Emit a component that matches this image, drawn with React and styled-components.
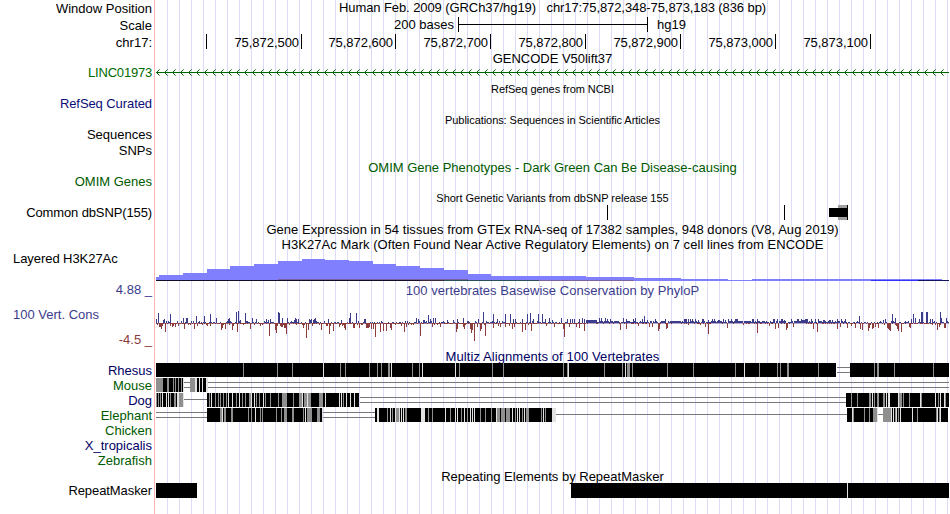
import React from 'react'
import styled, { createGlobalStyle } from 'styled-components';

const BLACK = '#000';
const GREY = '#8f8f8f';
const LIGHT = '#e2e2e2';

const TICKS = [
  { width: 51, text: '' },
  { width: 95, text: '75,872,500' },
  { width: 94, text: '75,872,600' },
  { width: 95, text: '75,872,700' },
  { width: 95, text: '75,872,800' },
  { width: 95, text: '75,872,900' },
  { width: 95, text: '75,873,000' },
  { width: 95, text: '75,873,100' },
];

// [start x, top y]
const H3K27AC = [
  [156, 277], [159, 275], [183, 273], [207, 269], [230, 266], [254, 264], [278, 261],
  [302, 259], [325, 260], [349, 261], [373, 264], [396, 266], [420, 268], [444, 270],
  [468, 274], [491, 276], [586, 277], [634, 278], [681, 279], [728, 280], [752, 279],
  [942, 280], [949, 280],
];

// [x1, x2, y, colour]
const H3K27AC_BASE = [
  [278, 468, 279, '#7a62a0'], [156, 420, 280, '#140c28'], [420, 444, 280, '#3a2838'],
  [444, 539, 280, '#28505a'], [539, 634, 280, '#7c64a0'], [871, 918, 280, '#3434ff'],
  [918, 949, 280, '#14145c'],
];

// peaks of the conservation score, offsets are in thirds of a pixel
const PEAKS = [
  {
    origin: 150,
    up: [[18, 4], [25, 10], [40, 3], [43, 4], [61, 9], [100, 5], [109, 5], [112, 5], [124, 2], [139, 7], [148, 2], [163, 7], [181, 9], [199, 5], [217, 2], [232, 2], [235, 4], [238, 5], [259, 11], [265, 12], [271, 3], [286, 10], [292, 2], [307, 5], [319, 4], [343, 2], [349, 4], [355, 3], [361, 4], [385, 11], [388, 10], [397, 5], [412, 5], [433, 3], [436, 5], [439, 4], [445, 4], [478, 4], [481, 3], [484, 4], [490, 3], [493, 4], [496, 5], [499, 2], [535, 4], [574, 3], [598, 5], [601, 10], [619, 10], [643, 4], [646, 4], [799, 5], [805, 4]],
    down: [[22, 2], [28, 4], [31, 4], [34, 6], [37, 3], [46, 9], [61, 3], [67, 4], [70, 3], [76, 4], [85, 3], [103, 6], [115, 2], [121, 2], [133, 6], [142, 3], [157, 2], [172, 3], [181, 3], [214, 7], [217, 5], [220, 2], [226, 6], [247, 7], [250, 3], [262, 9], [280, 2], [301, 6], [313, 2], [331, 3], [358, 13], [376, 7], [379, 10], [382, 3], [391, 3], [394, 4], [397, 4], [403, 5], [406, 5], [409, 11], [418, 2], [460, 5], [469, 15], [475, 7], [487, 3], [514, 7], [529, 3], [532, 3], [538, 11], [541, 3], [550, 8], [568, 4], [571, 2], [577, 3], [583, 5], [586, 7], [610, 5], [613, 5], [628, 5], [634, 2], [649, 5], [652, 5], [655, 5], [658, 4], [664, 6], [670, 6], [676, 14], [691, 9], [700, 8], [709, 8], [721, 5], [724, 7], [736, 2], [754, 3], [763, 9], [769, 4], [784, 2]],
  },
  {
    origin: 420,
    up: [[10, 3], [13, 3], [25, 8], [31, 4], [40, 5], [46, 5], [82, 3], [100, 3], [112, 4], [130, 5], [145, 2], [175, 4], [190, 11], [220, 9], [232, 4], [256, 9], [271, 9], [280, 4], [286, 4], [307, 4], [322, 9], [331, 10], [340, 4], [355, 9], [367, 9], [376, 4], [388, 5], [397, 3], [424, 5], [442, 4], [451, 4], [457, 4], [463, 4], [478, 4], [487, 5], [493, 4], [499, 3], [502, 3], [505, 3], [508, 3], [511, 3], [514, 3], [517, 3], [520, 3], [523, 3], [526, 3], [529, 3], [538, 5], [544, 5], [556, 5], [562, 4], [571, 4], [589, 2], [610, 5], [619, 4], [640, 4], [646, 5], [667, 4], [673, 7], [682, 3], [706, 4], [736, 4], [754, 2], [757, 2], [760, 2], [763, 2], [769, 2], [772, 2], [775, 2], [781, 2], [787, 2], [796, 4], [805, 4]],
    down: [[1, 13], [37, 4], [43, 2], [61, 4], [109, 9], [112, 6], [130, 4], [133, 6], [151, 6], [154, 10], [157, 7], [163, 18], [172, 4], [181, 8], [184, 6], [196, 13], [220, 5], [235, 3], [241, 4], [256, 4], [268, 3], [277, 6], [283, 4], [307, 9], [316, 7], [334, 8], [379, 3], [403, 4], [430, 6], [433, 14], [448, 4], [469, 4], [478, 5], [493, 8], [601, 7], [619, 6], [655, 3], [688, 4], [697, 4], [715, 8], [718, 6], [739, 6], [742, 5]],
  },
  {
    origin: 680,
    up: [[13, 4], [19, 4], [31, 4], [37, 4], [46, 4], [55, 3], [67, 4], [70, 4], [85, 3], [97, 4], [103, 4], [115, 3], [118, 3], [130, 4], [136, 3], [145, 4], [154, 4], [166, 4], [169, 4], [172, 4], [178, 2], [181, 2], [187, 2], [193, 2], [196, 2], [199, 2], [202, 2], [205, 2], [208, 2], [211, 2], [217, 4], [220, 4], [232, 4], [250, 2], [268, 2], [280, 4], [283, 4], [292, 4], [304, 4], [307, 4], [313, 3], [334, 4], [352, 4], [355, 4], [364, 4], [367, 3], [370, 3], [373, 3], [376, 4], [379, 4], [382, 4], [394, 4], [406, 4], [415, 4], [430, 3], [433, 3], [436, 2], [448, 3], [451, 3], [457, 3], [472, 4], [484, 4], [496, 4], [538, 7], [610, 3], [616, 4], [637, 9], [646, 5], [676, 2], [694, 4], [700, 9], [706, 5], [718, 4], [724, 11], [727, 11], [739, 11], [742, 11], [751, 4], [757, 4], [781, 11], [784, 5], [799, 5]],
    down: [[25, 2], [61, 2], [76, 4], [85, 11], [142, 5], [190, 2], [232, 10], [268, 3], [286, 6], [295, 5], [319, 7], [322, 5], [340, 4], [400, 6], [412, 9], [472, 6], [481, 4], [502, 5], [514, 3], [526, 5], [541, 6], [547, 7], [565, 8], [568, 5], [577, 6], [580, 5], [586, 4], [595, 5], [622, 5], [625, 6], [628, 7], [631, 8], [649, 3], [652, 6], [655, 8], [664, 9], [688, 4], [691, 5], [757, 2], [772, 7], [778, 4], [793, 5], [796, 5]],
  },
];

const buildScores = () => {
  const up = {};
  const down = {};
  // low signal between the peaks, mostly positive on the right half
  for (let x = 156; x < 949; x++) {
    const n = (x * 7919 + ((x * x) % 31) * 53) % 17;
    if (x > 585 && x < 850) {
      up[x] = n < 9 ? 2 : 1;
      if (n > 12) down[x] = 1;
    } else {
      if (n < 9) up[x] = n < 2 ? 2 : 1;
      if (n > 7) down[x] = n > 15 ? 2 : 1;
    }
  }
  PEAKS.forEach((part) => {
    part.up.forEach(([dx, h]) => { up[Math.floor(part.origin + dx / 3)] = h; });
    part.down.forEach(([dx, h]) => {
      const x = Math.floor(part.origin + dx / 3);
      down[x] = h;
      if (up[x] < 3) delete up[x];
    });
  });
  return { up, down };
};

const SCORES = buildScores();

// blocks: [origin, start, end], marks: [origin, [[start, end]]] in thirds of a pixel
const ALIGNMENTS = [
  {
    name: 'Rhesus', color: '#000064',
    blocks: [[0, 468, 2508], [0, 2550, 2847]],
    lines: [[837, 850, 2]],
    grey: [[150, [[279, 282], [381, 384], [426, 429], [570, 573], [585, 588], [657, 660]]],
      [360, [[27, 30], [51, 54], [63, 66], [84, 90], [156, 159], [177, 180], [297, 300], [396, 399], [429, 432], [609, 612], [621, 624]]],
      [580, [[72, 75], [126, 129], [141, 150], [156, 159], [261, 264], [339, 342]]],
      [730, [[15, 18], [87, 90], [141, 144], [150, 153], [171, 177], [264, 267], [432, 435], [441, 447], [492, 495], [609, 612]]]],
    light: [[150, [[519, 522]]], [360, [[93, 96], [186, 189], [285, 288], [624, 627]]], [580, [[135, 138]]], [730, [[42, 45]]]],
  },
  {
    name: 'Mouse', color: '#005a00',
    blocks: [[150, 18, 99], [150, 120, 171]],
    lines: [[184, 190, 2], [208, 949, 2]],
    grey: [[150, [[18, 39], [51, 57], [69, 72], [75, 78], [84, 87], [93, 96], [120, 135]]]],
    light: [[150, [[99, 102], [135, 141], [147, 150], [156, 159], [168, 174]]]],
  },
  {
    name: 'Dog', color: '#000064',
    blocks: [[150, 18, 99], [150, 171, 627], [730, 348, 657]],
    lines: [[184, 207, 1], [360, 846, 2]],
    grey: [[150, [[18, 21], [24, 27], [30, 33], [60, 63], [72, 78], [87, 99], [177, 180], [195, 198], [204, 207], [210, 213], [219, 222], [228, 231], [258, 261], [276, 279], [285, 288], [297, 303], [318, 321], [327, 330], [345, 348], [360, 363], [384, 387], [396, 411], [429, 432], [447, 456], [462, 471], [474, 483], [507, 519], [579, 582]]],
      [730, [[363, 366], [381, 384], [417, 423], [432, 435], [441, 447], [459, 465], [507, 516], [519, 522], [537, 540], [573, 576], [624, 627], [645, 648]]]],
    light: [[150, [[36, 39], [48, 51], [54, 57], [81, 87], [99, 102], [183, 186], [234, 237], [246, 249], [267, 270], [303, 306], [312, 315], [339, 342], [456, 459], [471, 474], [525, 528], [567, 570], [573, 576], [588, 591], [600, 603], [612, 615]]],
      [730, [[426, 429], [468, 471], [474, 480], [504, 507], [570, 573], [615, 618], [630, 633], [642, 645]]]],
  },
  {
    name: 'Elephant', color: '#005a00',
    blocks: [[150, 171, 516], [360, 45, 576], [730, 351, 441], [730, 459, 654]],
    lines: [[156, 207, 2], [323, 375, 2], [556, 847, 1], [878, 883, 1]],
    grey: [[150, [[210, 216], [222, 228], [243, 249], [294, 297], [303, 306], [330, 333], [336, 339], [378, 381], [393, 396], [402, 411], [426, 432], [459, 462], [471, 486], [501, 510]]],
      [360, [[81, 84], [96, 99], [108, 117], [135, 141], [204, 207], [216, 219], [270, 273], [303, 306], [321, 324], [360, 363], [375, 378], [393, 396], [411, 420], [423, 435], [438, 450], [465, 468], [486, 489], [498, 507], [543, 546], [555, 558]]],
      [730, [[369, 372], [402, 405], [417, 420], [429, 441], [459, 483], [495, 498], [504, 507], [561, 564], [618, 621], [627, 630]]]],
    light: [[150, [[216, 219], [315, 318], [465, 468], [516, 519]]],
      [360, [[51, 57], [90, 93], [105, 108], [117, 120], [123, 126], [129, 132], [183, 195], [255, 258], [285, 288], [291, 294], [312, 315], [330, 333], [336, 339], [342, 345], [408, 411], [456, 459], [471, 474], [477, 480], [492, 495], [549, 552], [576, 588]]],
      [730, [[366, 369], [441, 444], [483, 486], [489, 492], [498, 501], [510, 513], [546, 549], [621, 624], [630, 633]]]],
  },
  { name: 'Chicken', color: '#005a00' },
  { name: 'X_tropicalis', color: '#000064' },
  { name: 'Zebrafish', color: '#005a00' },
];

const GlobalStyle = createGlobalStyle`
  body {
    margin: 0;
    background: #fff;
  }
`;

const Browser = styled.div`
  display: flex;
  flex-direction: column;
  width: 950px;
  height: 514px;
  overflow: hidden;
  font-family: "Liberation Sans", Arial, Helvetica, sans-serif;
  font-size: 13px;
  line-height: 15px;
  color: #000;
  white-space: pre;
  background:
    linear-gradient(#ffb4b4, #ffb4b4) 154px 0 / 1px 100% no-repeat,
    repeating-linear-gradient(to right, transparent 0 11px, #dcdcf8 11px 12px) 156px 0 / 793px 100% no-repeat,
    #fff;
`;

const TrackRow = styled.div`
  display: grid;
  grid-template-columns: 156px 793px;
  flex: none;
  height: ${(props) => props.$height}px;
`;

const Label = styled.div`
  padding: ${(props) => props.$top || 0}px 4px 0 13px;
  text-align: ${(props) => (props.$left ? 'left' : 'right')};
  color: ${(props) => props.$color || '#000'};
  letter-spacing: ${(props) => props.$spacing || 0}px;
`;

const Title = styled.div`
  padding-top: ${(props) => props.$top || 0}px;
  text-align: center;
  color: ${(props) => props.$color || '#000'};
  letter-spacing: ${(props) => props.$spacing || 0}px;
`;

const SmallTitle = styled(Title)`
  padding-top: 1px;
  font-size: 11px;
`;

const ScaleBar = styled.div`
  display: flex;
`;

const ScaleText = styled.span`
  width: 298px;
  text-align: right;
`;

const ScaleLine = styled.div`
  box-sizing: border-box;
  width: 190px;
  height: 15px;
  margin: 0 9px 0 4px;
  border: solid #000;
  border-width: 0 1px;
  background: linear-gradient(#000, #000) 0 7px / 100% 1px no-repeat;
`;

const Ruler = styled.div`
  display: flex;
`;

const Tick = styled.div`
  box-sizing: border-box;
  width: ${(props) => props.$width}px;
  height: 15px;
  padding: 1px 2px 0 0;
  border-right: 1px solid #000;
  text-align: right;
  letter-spacing: -0.05px;
`;

const Chart = styled.svg`
  display: block;
  overflow: visible;
  shape-rendering: crispEdges;
`;

const ScoreLabels = styled.div`
  display: flex;
  flex-direction: column;
  gap: 10px;
`;

const Row = ({ height, label, color, left, top, spacing, children }) => (
  <TrackRow $height={height}>
    <Label $color={color} $left={left} $top={top} $spacing={spacing}>{label}</Label>
    {children}
  </TrackRow>
);

const Track = ({ y = 0, height = 15, children }) => (
  <Chart width="793" height={height} viewBox={`156 ${y} 793 ${height}`}>{children}</Chart>
);

const Marks = ({ groups, fill }) => (
  (groups || []).map(([origin, list]) => list.map(([a, b]) => (
    <rect key={origin + a / 3} x={origin + a / 3} y="0" width={(b - a) / 3} height="14" fill={fill} />
  )))
);

const GeneArrows = () => {
  const arrows = [];
  for (let x = 156; x < 947; x += 8) arrows.push(x);
  return (
    <Track>
      <rect x="156" y="7" width="793" height="1" fill="#006400" />
      {arrows.map((x) => (
        <g key={x} fill="#006400">
          <rect x={x + 1} y="6" width="1" height="3" />
          <rect x={x + 2} y="5" width="1" height="1" />
          <rect x={x + 2} y="9" width="1" height="1" />
          <rect x={x + 3} y="4" width="1" height="1" opacity="0.6" />
          <rect x={x + 3} y="10" width="1" height="1" opacity="0.6" />
        </g>
      ))}
    </Track>
  );
};

const Variants = () => (
  <Track>
    <rect x="607" y="0" width="1" height="15" />
    <rect x="784" y="0" width="1" height="15" />
    <rect x="838" y="0" width="9" height="15" fill="#a0a0a0" />
    <rect x="829" y="3" width="19" height="9" />
    <rect x="847" y="0" width="1" height="15" />
  </Track>
);

const Histogram = () => (
  <Track y={251} height={31}>
    {H3K27AC.slice(0, -1).map(([x, y], i) => (
      <rect key={x} x={x} y={y} width={H3K27AC[i + 1][0] - x} height={281 - y} fill="#8080ff" />
    ))}
    {H3K27AC_BASE.map(([x1, x2, y, fill]) => (
      <rect key={x1 + '-' + y} x={x1} y={y} width={x2 - x1} height="1" fill={fill} />
    ))}
  </Track>
);

const Conservation = () => (
  <Track y={298} height={50}>
    {Object.keys(SCORES.up).map((x) => (
      <rect key={x} x={x} y={323 - SCORES.up[x]} width="1" height={SCORES.up[x]} fill="#3c3c8c" />
    ))}
    <rect x="156" y="323" width="430" height="1" fill="#a08090" />
    <rect x="586" y="323" width="363" height="1" fill="#b4a8c8" />
    {Object.keys(SCORES.down).map((x) => (
      <rect key={x} x={x} y="323" width="1" height={SCORES.down[x]} fill="#8c3c3c" />
    ))}
  </Track>
);

const Alignment = ({ data }) => (
  <Track>
    {(data.lines || []).map(([x1, x2, count]) => (
      <g key={x1} fill="#787878">
        <rect x={x1} y={count === 2 ? 4 : 6} width={x2 - x1} height="1" />
        {count === 2 && <rect x={x1} y="9" width={x2 - x1} height="1" />}
      </g>
    ))}
    {(data.blocks || []).map(([origin, a, b]) => (
      <rect key={origin + a / 3} x={origin + a / 3} y="0" width={(b - a) / 3} height="14" fill={BLACK} />
    ))}
    <Marks groups={data.grey} fill={GREY} />
    <Marks groups={data.light} fill={LIGHT} />
  </Track>
);

const Repeats = () => (
  <Track>
    <rect x="156" y="0" width="41" height="15" />
    <rect x="571" y="0" width="276" height="15" />
    <rect x="847" y="0" width="1" height="15" fill="#e2e2e2" />
    <rect x="848" y="0" width="101" height="15" />
  </Track>
);

const App = () => {
  return (
    <>
      <GlobalStyle />
      <Browser>
        <Row height={17} label="Window Position" top={1}>
          <Title $spacing={-0.085}>{'Human Feb. 2009 (GRCh37/hg19)   chr17:75,872,348-75,873,183 (836 bp)'}</Title>
        </Row>
        <Row height={17} label="Scale" top={1}>
          <ScaleBar>
            <ScaleText>200 bases</ScaleText>
            <ScaleLine />
            <span>hg19</span>
          </ScaleBar>
        </Row>
        <Row height={17} label="chr17:" top={1}>
          <Ruler>
            {TICKS.map((tick) => <Tick key={tick.text} $width={tick.width}>{tick.text}</Tick>)}
          </Ruler>
        </Row>
        <Row height={14}><Title $spacing={-0.03}>GENCODE V50lift37</Title></Row>
        <Row height={16} label="LINC01973" color="#006a00" spacing={-0.2}><GeneArrows /></Row>
        <Row height={15}><SmallTitle $spacing={-0.06}>RefSeq genes from NCBI</SmallTitle></Row>
        <Row height={16} label="RefSeq Curated" color="#0c0c78" spacing={-0.08} />
        <Row height={15}><SmallTitle $spacing={-0.06}>Publications: Sequences in Scientific Articles</SmallTitle></Row>
        <Row height={16} label="Sequences" />
        <Row height={17} label="SNPs" />
        <Row height={14}><Title $color="#005a00">OMIM Gene Phenotypes - Dark Green Can Be Disease-causing</Title></Row>
        <Row height={16} label="OMIM Genes" color="#005a00" />
        <Row height={15}><SmallTitle $spacing={-0.02}>Short Genetic Variants from dbSNP release 155</SmallTitle></Row>
        <Row height={17} label="Common dbSNP(155)" spacing={-0.12}><Variants /></Row>
        <Row height={15}><Title $spacing={0.055}>Gene Expression in 54 tissues from GTEx RNA-seq of 17382 samples, 948 donors (V8, Aug 2019)</Title></Row>
        <Row height={14}><Title $spacing={0.05}>H3K27Ac Mark (Often Found Near Active Regulatory Elements) on 7 cell lines from ENCODE</Title></Row>
        <Row height={31} label="Layered H3K27Ac" left spacing={-0.06}><Histogram /></Row>
        <TrackRow $height={67}>
          <ScoreLabels>
            <Label $color="#3c3c8c">4.88 _</Label>
            <Label $color="#3c3c8c" $left>100 Vert. Cons</Label>
            <Label $color="#8c3c3c">-4.5 _</Label>
          </ScoreLabels>
          <div>
            <Title $color="#3c3c8c" $top={1} $spacing={0.03}>100 vertebrates Basewise Conservation by PhyloP</Title>
            <Conservation />
          </div>
        </TrackRow>
        <Row height={14}><Title $color="#000064" $spacing={0.08}>Multiz Alignments of 100 Vertebrates</Title></Row>
        {ALIGNMENTS.map((data) => (
          <Row key={data.name} height={15} label={data.name} color={data.color}>
            <Alignment data={data} />
          </Row>
        ))}
        <Row height={15}><Title $top={1}>Repeating Elements by RepeatMasker</Title></Row>
        <Row height={16} label="RepeatMasker" spacing={-0.08}><Repeats /></Row>
      </Browser>
    </>
  );
};

export default App
